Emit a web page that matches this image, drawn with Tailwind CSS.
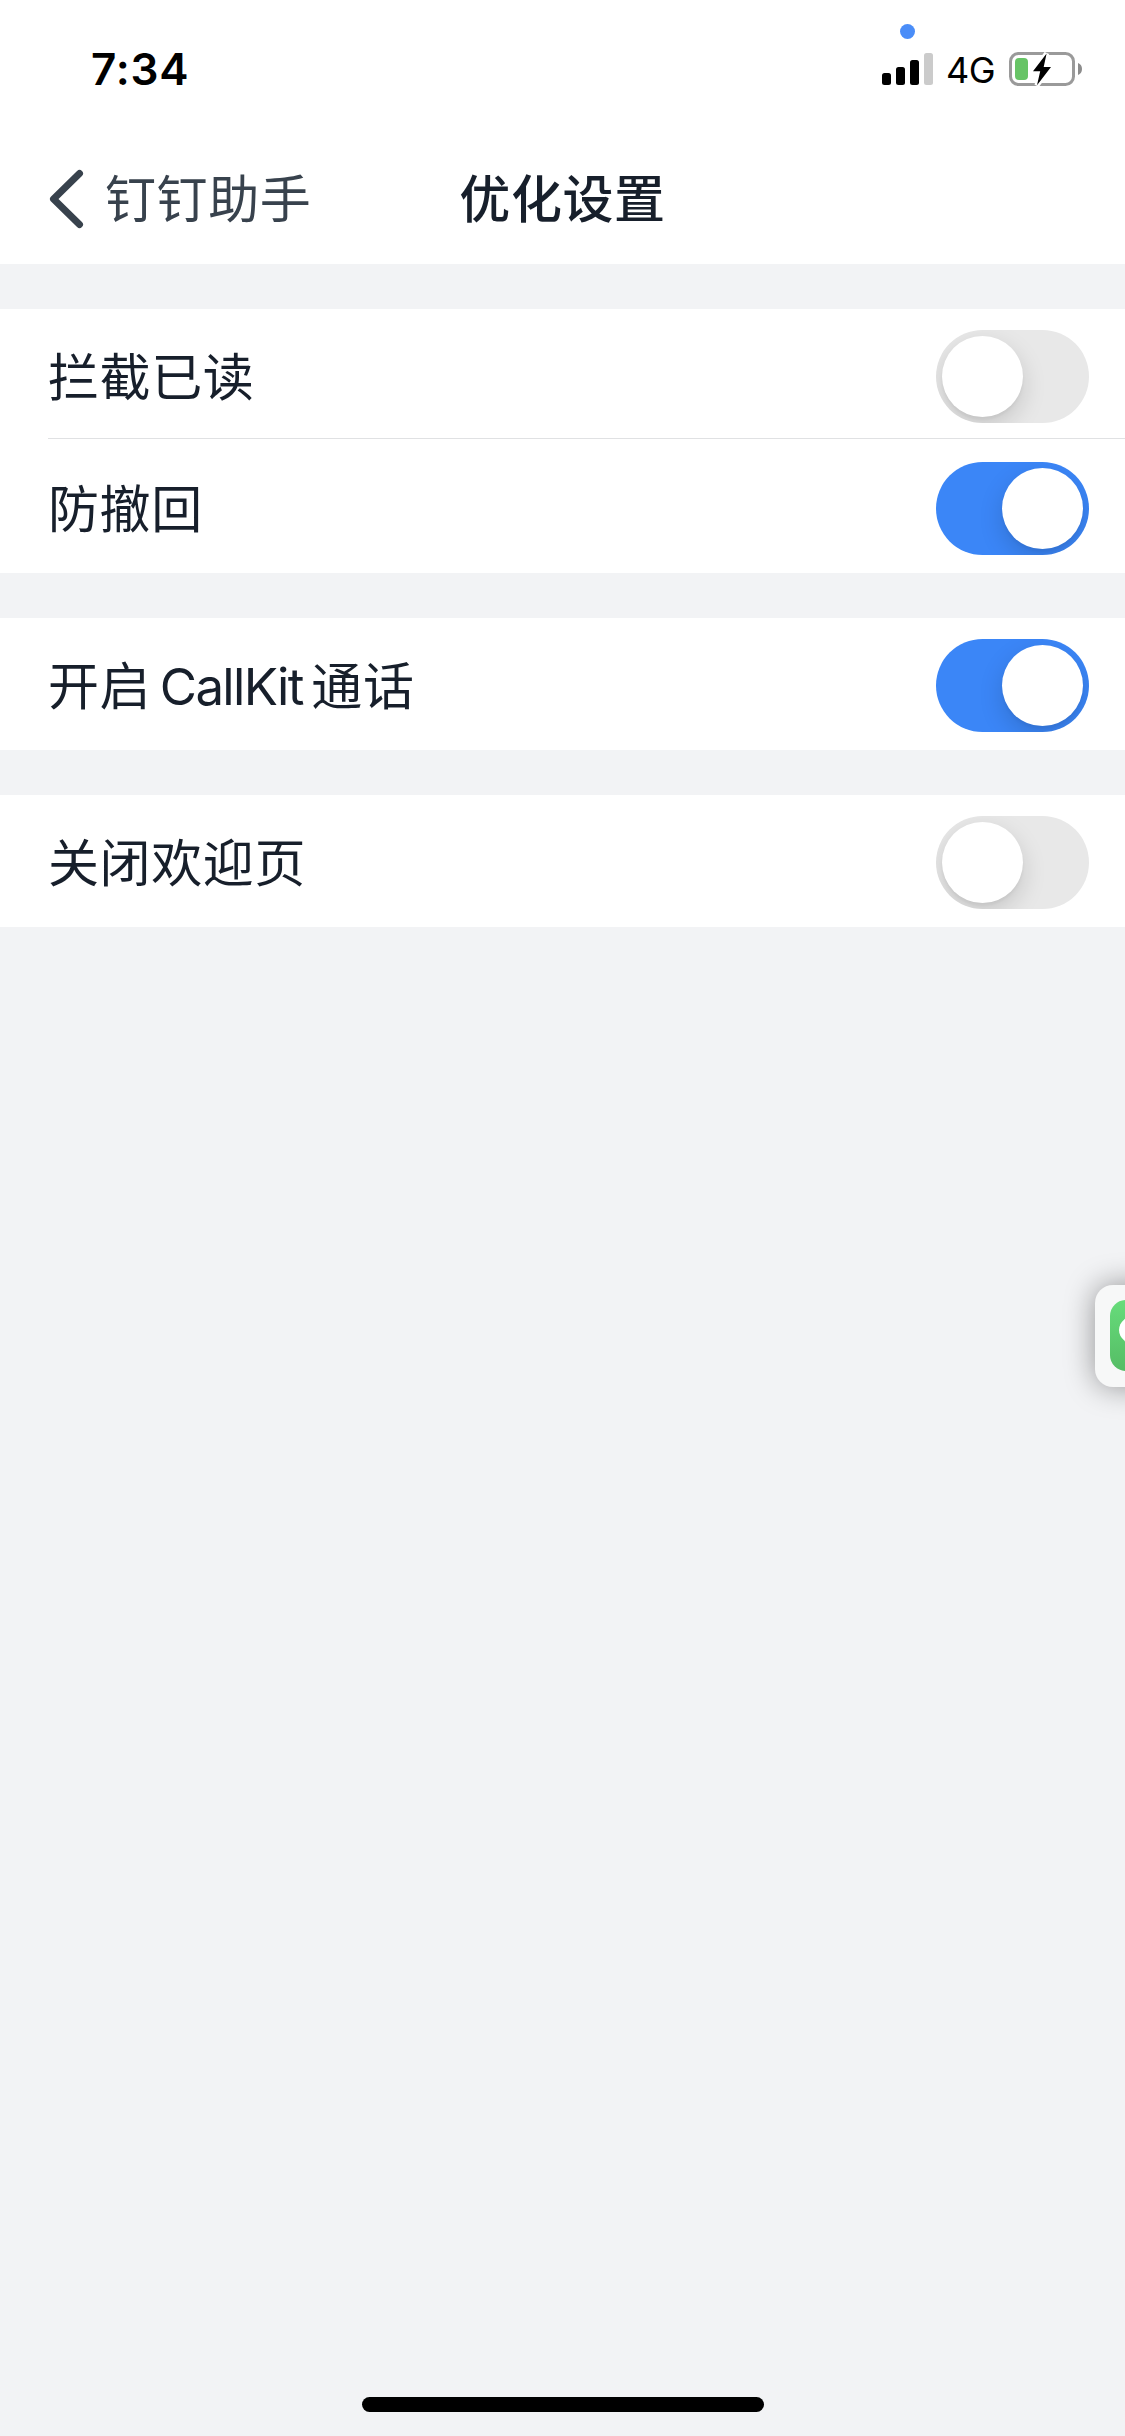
<!DOCTYPE html>
<html lang="zh-CN">
<head>
<meta charset="utf-8">
<title>优化设置</title>
<script src="https://cdn.jsdelivr.net/npm/@tailwindcss/browser@4"></script>
</head>
<body class="bg-[#f2f3f5]">
<div class="relative flex h-[2436px] w-[1125px] flex-col overflow-hidden bg-[#f2f3f5] font-['Inter','Noto_Sans_CJK_SC',sans-serif] text-[51px] leading-[72px] tracking-[0.6px] text-[#171f2b]">

  <header class="h-[264px] bg-white">
    <!-- Status bar -->
    <div class="relative flex h-[132px] items-center justify-between pt-[6px] pr-[42px] pl-[91px] text-black">
      <span class="text-[44px] font-semibold tracking-[0.8px]">7:34</span>
      <div class="flex items-center">
        <svg class="h-[34px] w-[52px]" viewBox="0 0 52 34">
          <rect x="0" y="21" width="9" height="12" rx="2.5"/>
          <rect x="14" y="15" width="9" height="18" rx="2.5"/>
          <rect x="28" y="8" width="9" height="25" rx="2.5"/>
          <rect x="42" y="1" width="9" height="32" rx="2.5" fill="#cbcbcb"/>
        </svg>
        <span class="ml-[12px] w-[63px] pt-px text-[36px] leading-[40px] tracking-[-0.4px]">4G</span>
        <svg class="h-[34px] w-[74px]" viewBox="0 0 74 34">
          <rect x="1.5" y="1.5" width="63" height="31" rx="8" fill="none" stroke="#9a9a9a" stroke-width="3"/>
          <rect x="6" y="6" width="13" height="22" rx="4" fill="#67c466"/>
          <path d="M69 11c2.600 1 4 3 4 6s-1.400 5-4 6z" fill="#8c8c8c"/>
          <path d="M37.600 1.500 24 19.300h7.200L28 33.200 42 15h-7.300z" fill="#000" stroke="#fff" stroke-width="5" paint-order="stroke"/>
        </svg>
      </div>
      <span class="absolute top-[24px] left-[900px] size-[15px] rounded-full bg-[#4a8df8]"></span>
    </div>
    <!-- Navigation bar -->
    <nav class="grid h-[132px] grid-cols-[1fr_auto_1fr] items-center pt-[2px]">
      <a class="flex items-center pl-[48px] text-[#38424d]">
        <svg class="h-[60px] w-[38px]" viewBox="0 0 38 60" fill="none" stroke="currentColor" stroke-width="7" stroke-linecap="round" stroke-linejoin="round"><path d="M31.500 4.500 5.500 30 31.500 55.500"/></svg>
        <span class="ml-[19px] pt-px">钉钉助手</span>
      </a>
      <h1 class="pt-px font-medium">优化设置</h1>
    </nav>
  </header>

  <main class="mt-[45px] flex flex-col gap-[45px]">
    <section class="bg-white">
      <div class="relative flex h-[132px] items-center justify-between pt-[3px] pr-[36px] pl-[48px]">
        <span class="pt-[2px]">拦截已读</span>
        <span class="flex h-[93px] w-[153px] overflow-hidden rounded-full bg-[#e8e8e8] p-[6px]"><i class="size-[81px] rounded-full bg-white shadow-[0_9px_24px_rgba(0,0,0,0.15),0_3px_3px_rgba(0,0,0,0.04)]"></i></span>
        <span class="absolute top-[129px] right-0 left-[48px] h-px bg-[#e0e1e3]"></span>
      </div>
      <div class="flex h-[132px] items-center justify-between pt-[3px] pr-[36px] pl-[48px]">
        <span class="pt-[2px]">防撤回</span>
        <span class="flex h-[93px] w-[153px] justify-end overflow-hidden rounded-full bg-[#3b86f7] p-[6px]"><i class="size-[81px] rounded-full bg-white shadow-[0_9px_24px_rgba(0,0,0,0.15),0_3px_3px_rgba(0,0,0,0.04)]"></i></span>
      </div>
    </section>
    <section class="flex h-[132px] items-center justify-between bg-white pt-[3px] pr-[36px] pl-[48px]">
      <span class="pt-[2px]">开启<span class="tracking-[-1.7px] [word-spacing:-4px]"> CallKit </span>通话</span>
      <span class="flex h-[93px] w-[153px] justify-end overflow-hidden rounded-full bg-[#3b86f7] p-[6px]"><i class="size-[81px] rounded-full bg-white shadow-[0_9px_24px_rgba(0,0,0,0.15),0_3px_3px_rgba(0,0,0,0.04)]"></i></span>
    </section>
    <section class="flex h-[132px] items-center justify-between bg-white pt-[3px] pr-[36px] pl-[48px]">
      <span class="pt-[2px]">关闭欢迎页</span>
      <span class="flex h-[93px] w-[153px] overflow-hidden rounded-full bg-[#e8e8e8] p-[6px]"><i class="size-[81px] rounded-full bg-white shadow-[0_9px_24px_rgba(0,0,0,0.15),0_3px_3px_rgba(0,0,0,0.04)]"></i></span>
    </section>
  </main>

  <!-- Floating window docked at the screen edge -->
  <div class="absolute top-[1285px] left-[1095px] h-[102px] w-[102px] rounded-[18px] bg-[#f7f8f8] p-[15px] shadow-[0_0_30px_rgba(0,0,0,0.4)]">
    <div class="h-[71px] w-[72px] rounded-[16px] bg-linear-to-b from-[#67dc7b] to-[#55bd65] pt-[15px] pl-[9px]">
      <div class="h-[30px] w-[36px] rounded-[50%] bg-white"></div>
    </div>
  </div>

  <!-- Home indicator -->
  <div class="mt-auto mb-[24px] ml-[362px] h-[15px] w-[402px] rounded-full bg-black"></div>
</div>
</body>
</html>
